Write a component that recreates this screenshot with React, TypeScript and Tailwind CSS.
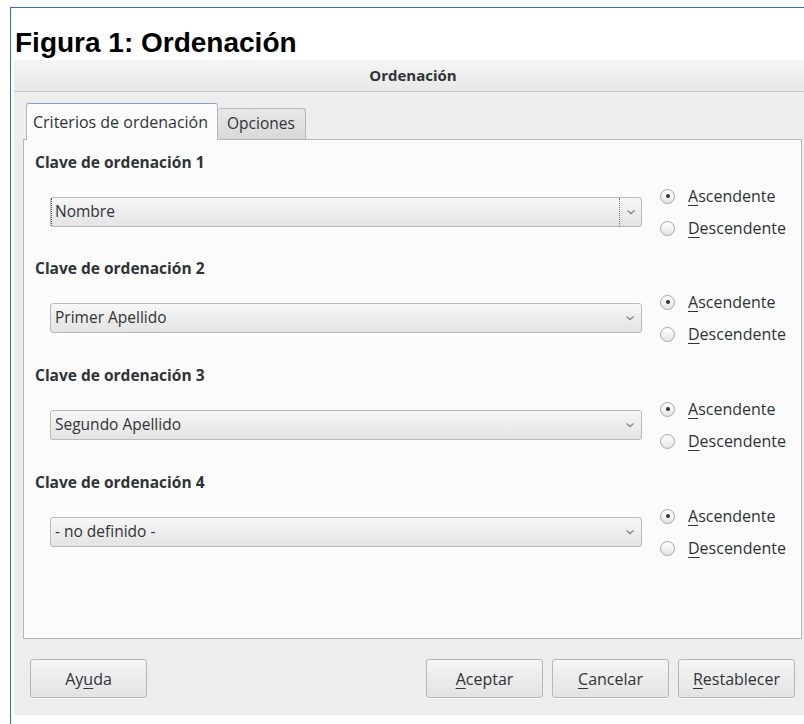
import React from "react";

const ui = { fontFamily: '"Open Sans", "Noto Sans", "DejaVu Sans", sans-serif' };

function Mnemonic({ text, at }: { text: string; at: number }) {
  return (
    <>
      {text.slice(0, at)}
      <span className="underline underline-offset-[3px] decoration-1">{text.charAt(at)}</span>
      {text.slice(at + 1)}
    </>
  );
}

function Chevron() {
  return (
    <svg width="12" height="8" viewBox="0 0 12 8" className="block">
      <path d="M2.5 2.5 L6 5.5 L9.5 2.5" fill="none" stroke="#8a8a8a" strokeWidth="1.5" />
    </svg>
  );
}

function Select({ value, focused }: { value: string; focused?: boolean }) {
  return (
    <div className="ml-[26px] w-[592px] h-[30px] rounded-[3px] border border-[#b9b9b9] bg-gradient-to-b from-[#f7f7f7] to-[#e3e3e3] flex items-center shadow-[0_1px_0_rgba(255,255,255,0.8)]">
      <div
        className={
          focused
            ? "flex-1 h-full flex items-center pl-[3px] border-l border-dotted border-l-[#555]"
            : "flex-1 h-full flex items-center pl-[4px]"
        }
      >
        <span className="text-[15.5px] text-[#2e3436] leading-none">{value}</span>
      </div>
      <div
        className={
          focused
            ? "w-[22px] h-full flex items-center justify-center border-l border-dotted border-l-[#777]"
            : "w-[22px] h-full flex items-center justify-center"
        }
      >
        <Chevron />
      </div>
    </div>
  );
}

function Radio({ label, checked }: { label: string; checked?: boolean }) {
  return (
    <div className="h-[32px] flex items-center">
      <div className="w-[15px] h-[15px] rounded-full border border-[#a7a7a7] bg-gradient-to-b from-[#ffffff] to-[#e4e4e4] flex items-center justify-center">
        {checked && <div className="w-[4px] h-[4px] rounded-full bg-[#2e3436]" />}
      </div>
      <span className="ml-[13px] text-[16px] text-[#2e3436] leading-none">
        <Mnemonic text={label} at={0} />
      </span>
    </div>
  );
}

function SortKey({ n, value, focused, gap }: { n: number; value: string; focused?: boolean; gap: string }) {
  return (
    <div className={gap}>
      <div className="pl-[11px] h-[20px] flex items-center text-[15.5px] font-bold text-[#2e3436]">
        Clave de ordenación {n}
      </div>
      <div className="mt-[7px] flex items-center">
        <Select value={value} focused={focused} />
        <div className="ml-[18px] flex flex-col">
          <Radio label="Ascendente" checked />
          <Radio label="Descendente" />
        </div>
      </div>
    </div>
  );
}

function Button({ label, at }: { label: string; at: number }) {
  return (
    <div className="w-[117px] h-[39px] rounded-[3px] border border-[#b7b7b7] bg-gradient-to-b from-[#f5f5f5] to-[#e2e2e2] flex items-center justify-center shadow-[0_1px_0_rgba(255,255,255,0.9)]">
      <span className="text-[16px] text-[#2e3436] leading-none">
        <Mnemonic text={label} at={at} />
      </span>
    </div>
  );
}

export default function App() {
  return (
    <div className="w-[804px] h-[724px] bg-white overflow-hidden pt-[7px] pl-[10px]">
      <div className="h-[717px] border-l border-t border-[#2d6bd6] flex flex-col">
        <h1
          className="mt-[21px] ml-[4px] text-[28px] leading-[28px] font-bold text-black"
          style={{ fontFamily: '"Liberation Sans", Arial, sans-serif' }}
        >
          Figura 1: Ordenación
        </h1>

        <div className="mt-[3px] ml-[3px] h-[655px] bg-[#ededed] rounded-tl-[4px] flex flex-col" style={ui}>
          <div className="h-[32px] shrink-0 border-b border-[#c6c6c6] bg-gradient-to-b from-[#f4f4f4] to-[#e8e8e8] rounded-tl-[4px] flex items-center justify-center">
            <span className="text-[15px] font-bold text-[#2e3436] ml-[8px]">Ordenación</span>
          </div>

          <div className="pt-[11px] pl-[9px] pr-[2px]">
            <div className="flex items-end pl-[3px] h-[36px]">
              <div className="relative z-10 -mb-px h-[37px] w-[192px] rounded-t-[3px] border border-b-0 border-[#b7b7b7] border-t-[#7aa5dc] bg-[#fcfcfc] flex items-center pl-[6px]">
                <span className="text-[16px] text-[#2e3436] leading-none">Criterios de ordenación</span>
              </div>
              <div className="h-[31px] w-[88px] rounded-t-[3px] border border-b-0 border-l-0 border-[#b7b7b7] bg-gradient-to-b from-[#e8e8e8] to-[#d8d8d8] flex items-center pl-[9px]">
                <span className="text-[15.5px] text-[#2e3436] leading-none">Opciones</span>
              </div>
            </div>
            <div className="h-[500px] border border-[#b7b7b7] bg-[#fbfbfb] pt-[13px]">
              <SortKey n={1} value="Nombre" focused gap="" />
              <SortKey n={2} value="Primer Apellido" gap="mt-[15px]" />
              <SortKey n={3} value="Segundo Apellido" gap="mt-[16px]" />
              <SortKey n={4} value="- no definido -" gap="mt-[16px]" />
            </div>
          </div>

          <div className="mt-[20px] pl-[16px] pr-[9px] flex items-center">
            <Button label="Ayuda" at={2} />
            <div className="flex-1" />
            <div className="flex gap-[9px]">
              <Button label="Aceptar" at={0} />
              <Button label="Cancelar" at={0} />
              <Button label="Restablecer" at={0} />
            </div>
          </div>
        </div>
      </div>
    </div>
  );
}
